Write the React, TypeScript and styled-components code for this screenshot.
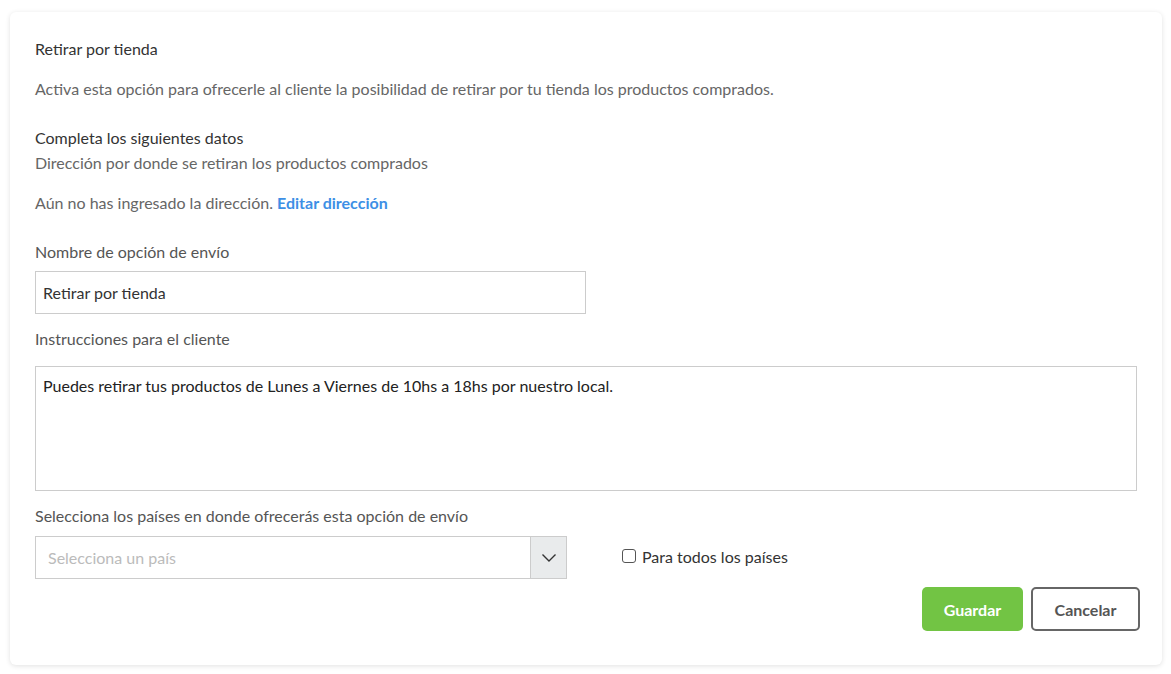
import React from 'react';
import styled, {createGlobalStyle} from 'styled-components';

const GlobalStyle = createGlobalStyle`
	html, body {
		margin: 0;
		padding: 0;
		background: #fff;
	}
	body {
		font-family: Lato, 'Liberation Sans', sans-serif;
	}
	* {
		box-sizing: border-box;
	}
`;

const Page = styled.div`
	padding: 12px 9px 10px 10px;
`;

const Card = styled.div`
	background: #fff;
	border-radius: 6px;
	box-shadow: 0 1px 5px rgba(0, 0, 0, 0.12);
	padding: 27px 22px 34px 25px;
	font-size: 16px;
	color: #666;
`;

const Title = styled.div`
	color: #333;
	line-height: 20px;
`;

const Text = styled.div<{$top?: number; $dark?: boolean}>`
	margin-top: ${(p) => p.$top ?? 0}px;
	color: ${(p) => (p.$dark ? '#333' : '#666')};
	line-height: 20px;
`;

const Link = styled.a`
	color: #3d8fe5;
	font-weight: 700;
	text-decoration: none;
`;

const Label = styled.div<{$top: number}>`
	margin-top: ${(p) => p.$top}px;
	color: #555;
	line-height: 20px;
`;

const Input = styled.input`
	display: block;
	margin-top: 9px;
	width: 551px;
	height: 43px;
	border: 1px solid #ccc;
	padding: 0 7px;
	font: inherit;
	color: #333;
	outline: none;
`;

const TextArea = styled.textarea`
	display: block;
	margin-top: 17px;
	width: 1102px;
	height: 125px;
	border: 1px solid #ccc;
	padding: 9px 7px;
	font: inherit;
	color: #222;
	resize: none;
	outline: none;
`;

const CountryRow = styled.div`
	display: flex;
	align-items: center;
	margin-top: 10px;
`;

const Select = styled.div`
	display: flex;
	width: 532px;
	height: 43px;
	border: 1px solid #ccc;
`;

const Placeholder = styled.div`
	flex: 1;
	display: flex;
	align-items: center;
	padding: 0 12px;
	color: #bbb;
`;

const Arrow = styled.div`
	width: 36px;
	display: flex;
	align-items: center;
	justify-content: center;
	background: #e9ebec;
	border-left: 1px solid #ccc;
`;

const CheckLabel = styled.label`
	display: flex;
	align-items: center;
	gap: 6px;
	margin-left: 55px;
	margin-top: -3px;
	color: #333;
`;

const Box = styled.span`
	width: 14px;
	height: 14px;
	border: 1px solid #555;
	border-radius: 3px;
	background: #fff;
`;

const Actions = styled.div`
	display: flex;
	justify-content: flex-end;
	gap: 8px;
	margin-top: 8px;
`;

const Button = styled.button<{$primary?: boolean}>`
	height: 44px;
	padding: 0;
	border-radius: 5px;
	font: inherit;
	font-weight: 700;
	border: ${(p) => (p.$primary ? 'none' : '2px solid #666')};
	background: ${(p) => (p.$primary ? '#72c444' : '#fff')};
	color: ${(p) => (p.$primary ? '#fff' : '#555')};
	width: ${(p) => (p.$primary ? 101 : 109)}px;
`;

export default function App() {
	return (
		<Page>
			<GlobalStyle />
			<Card>
				<Title>Retirar por tienda</Title>
				<Text $top={20}>
					Activa esta opción para ofrecerle al cliente la posibilidad de retirar por tu tienda
					los productos comprados.
				</Text>
				<Text $top={29} $dark>
					Completa los siguientes datos
				</Text>
				<Text $top={5}>Dirección por donde se retiran los productos comprados</Text>
				<Text $top={20}>
					Aún no has ingresado la dirección. <Link href="#">Editar dirección</Link>
				</Text>
				<Label $top={29}>Nombre de opción de envío</Label>
				<Input defaultValue="Retirar por tienda" />
				<Label $top={15}>Instrucciones para el cliente</Label>
				<TextArea defaultValue="Puedes retirar tus productos de Lunes a Viernes de 10hs a 18hs por nuestro local." />
				<Label $top={15}>Selecciona los países en donde ofrecerás esta opción de envío</Label>
				<CountryRow>
					<Select>
						<Placeholder>Selecciona un país</Placeholder>
						<Arrow>
							<svg width="16" height="10" viewBox="0 0 16 10" fill="none">
								<path d="M1.5 1.5 L8 8 L14.5 1.5" stroke="#333" strokeWidth="1.4" />
							</svg>
						</Arrow>
					</Select>
					<CheckLabel>
						<Box />
						Para todos los países
					</CheckLabel>
				</CountryRow>
				<Actions>
					<Button $primary>Guardar</Button>
					<Button>Cancelar</Button>
				</Actions>
			</Card>
		</Page>
	);
}
